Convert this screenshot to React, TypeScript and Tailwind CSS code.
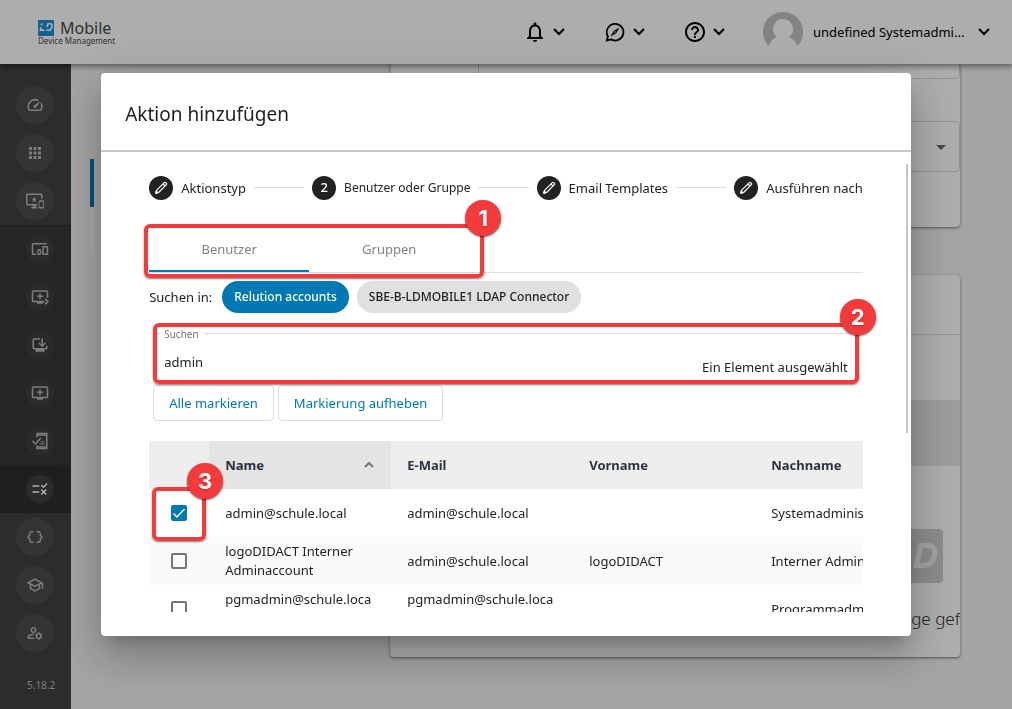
import React, { useState } from 'react';
import {
  MdApps,
  MdArrowDropDown,
  MdHelpOutline,
  MdImportantDevices,
  MdOutlineAddToQueue,
  MdOutlineBrowserUpdated,
  MdOutlineDataObject,
  MdOutlineDevicesOther,
  MdOutlineManageAccounts,
  MdOutlineNotifications,
  MdOutlineQueuePlayNext,
  MdOutlineRule,
  MdOutlineSchool,
  MdOutlineSpeed,
} from 'react-icons/md';

interface Account {
  id: number;
  name: string;
  email: string;
  firstName: string;
  lastName: string;
}

const ACCOUNTS: Account[] = [
  { id: 1, name: 'admin@schule.local', email: 'admin@schule.local', firstName: '', lastName: 'Systemadministrator' },
  { id: 2, name: 'logoDIDACT Interner Adminaccount', email: 'admin@schule.local', firstName: 'logoDIDACT', lastName: 'Interner Administrator' },
  { id: 3, name: 'pgmadmin@schule.local', email: 'pgmadmin@schule.local', firstName: '', lastName: 'Programmadministrator' },
];

const STEPS = ['Aktionstyp', 'Benutzer oder Gruppe', 'Email Templates', 'Ausführen nach'];
const ACTIVE_STEP = 1;

const PhoneChecklistIcon: React.FC = () => (
  <svg viewBox="0 0 24 24" className="size-[18px]" fill="none" stroke="currentColor" strokeWidth="2">
    <path d="M8 7V2h13v20H8v-4" />
    <path d="M8 4h13M8 20h13" />
    <path d="m2 12 4 4 7-8" />
    <path d="M13 13h5M11 16h7" strokeWidth="1.5" />
  </svg>
);

const CompassBubbleIcon: React.FC = () => (
  <svg viewBox="0 0 24 24" className="size-6">
    <path
      d="M12 3.9a8.300 8.300 0 1 1-4 15.500l-4.200 1 1.100-4A8.300 8.300 0 0 1 12 3.900Z"
      fill="none"
      stroke="currentColor"
      strokeWidth="1.8"
    />
    <path
      d="M16.500 7.500 13.200 13.200 7.500 16.500l3.300-5.700ZM12 11.200a.8.8 0 1 0 0 1.600.8.8 0 0 0 0-1.600Z"
      fill="currentColor"
      fillRule="evenodd"
    />
  </svg>
);

const Chevron: React.FC = () => (
  <svg viewBox="0 0 12 8" className="h-2 w-3" fill="none" stroke="currentColor" strokeWidth="2">
    <path d="m1 1 5 5 5-5" />
  </svg>
);

const PencilIcon: React.FC = () => (
  <svg viewBox="0 0 16 16" className="size-4" fill="none" stroke="currentColor" strokeWidth="1.2" strokeLinejoin="round">
    <path d="m2.800 13.200.7-2.800 7.800-7.800c.4-.4 1-.4 1.400 0l.7.7c.4.4.4 1 0 1.400l-7.800 7.800-2.800.7Z" />
    <path d="m10 4 2 2" />
    <path d="m2.800 13.200.5-2 1.500 1.500-2 .5Z" fill="currentColor" />
  </svg>
);

const Logo: React.FC = () => (
  <div className="flex flex-col pt-px text-[#4a4a4a]">
    <div className="flex h-[17px] items-start gap-1.5">
      <svg viewBox="0 0 16 16" className="size-4">
        <rect width="16" height="16" rx="1" fill="#1c8fd0" />
        <g fill="none" stroke="#fff" strokeWidth="1.6">
          <path d="M3.800 3.300 3.400 5.400M2.900 7.200l-.5 2.900h4" />
          <path d="m9.200 7 .6-3.200h2.400c1.600 0 2 1 1.700 2.700-.4 2.600-1.300 3.800-3 3.800H8.200" />
        </g>
      </svg>
      <span className="text-base leading-[17px]">Mobile</span>
    </div>
    <span className="text-[8px] leading-2">Device Management</span>
  </div>
);

const TOP_ITEMS = [
  { label: 'Dashboard', icon: <MdOutlineSpeed className="size-[18px]" /> },
  { label: 'Apps', icon: <MdApps className="size-[18px]" /> },
  { label: 'Geräte', icon: <MdImportantDevices className="size-[18px]" /> },
];

const DEVICE_ITEMS = [
  { label: 'Inventar', icon: <MdOutlineDevicesOther className="size-[18px]" /> },
  { label: 'Auto-Enrollments', icon: <MdOutlineQueuePlayNext className="size-[18px]" /> },
  { label: 'Updates', icon: <MdOutlineBrowserUpdated className="size-[18px]" /> },
  { label: 'Enrollments', icon: <MdOutlineAddToQueue className="size-[18px]" /> },
  { label: 'Richtlinien', icon: <PhoneChecklistIcon /> },
  { label: 'Regeln', icon: <MdOutlineRule className="size-[18px]" />, active: true },
];

const BOTTOM_ITEMS = [
  { label: 'Variablen', icon: <MdOutlineDataObject className="size-[18px]" /> },
  { label: 'Schule', icon: <MdOutlineSchool className="size-[18px]" /> },
  { label: 'Benutzer', icon: <MdOutlineManageAccounts className="size-[18px]" /> },
];

const NavItem: React.FC<{ label: string; icon: React.ReactNode }> = ({ label, icon }) => (
  <a href="#" aria-label={label} className="flex h-12 items-center pl-4">
    <span className="flex size-[38px] items-center justify-center rounded-full bg-[#4d4d4d]">{icon}</span>
  </a>
);

const Sidebar: React.FC = () => (
  <nav className="flex w-[71px] shrink-0 flex-col bg-[#424242] pt-[17px] text-[#b9b9b9]">
    {TOP_ITEMS.map((item) => (
      <NavItem key={item.label} {...item} />
    ))}
    <div className="border-y border-[#303030] bg-[#383838]">
      {DEVICE_ITEMS.map((item) => (
        <a
          key={item.label}
          href="#"
          aria-label={item.label}
          className={`flex h-12 items-center pl-[26px] first:-mt-px last:-mb-px ${item.active ? 'bg-[#2f2f2f] text-white' : ''}`}
        >
          <span className="flex size-7 items-center justify-center rounded-full bg-[#404040]">{item.icon}</span>
        </a>
      ))}
    </div>
    {BOTTOM_ITEMS.map((item) => (
      <NavItem key={item.label} {...item} />
    ))}
    <div className="mt-auto pb-4 pl-[27px] text-[10px] leading-4">5.18.2</div>
  </nav>
);

const Header: React.FC = () => (
  <header className="relative flex h-16 items-center justify-between bg-white pr-[22px] pl-[38px] shadow-[0_2px_6px_rgba(0,0,0,0.5)]">
    <Logo />
    <div className="flex items-center text-black">
      <div className="flex items-center gap-7">
        <button type="button" aria-label="Benachrichtigungen" className="flex w-[52px] items-center gap-1.5">
          <MdOutlineNotifications className="size-6" />
          <Chevron />
        </button>
        <button type="button" aria-label="Entdecken" className="flex w-[52px] items-center gap-1.5">
          <CompassBubbleIcon />
          <Chevron />
        </button>
        <button type="button" aria-label="Hilfe" className="flex w-[52px] items-center gap-1.5">
          <MdHelpOutline className="size-6" />
          <Chevron />
        </button>
      </div>
      <button type="button" aria-label="Konto" className="ml-7 flex items-center">
        <svg viewBox="0 0 40 40" className="size-10">
          <path
            d="M20 0a20 20 0 0 0-14.300 34C7.500 29 10.500 26.500 14 25a10 10 0 1 1 12 0c3.500 1.500 6.500 4 8.300 9A20 20 0 0 0 20 0Z"
            fill="#c2c2c2"
          />
        </svg>
        <span className="ml-2.5 w-[165px] text-left text-[13px] leading-5 whitespace-nowrap">undefined Systemadmi...</span>
        <Chevron />
      </button>
    </div>
  </header>
);

const RulePage: React.FC = () => (
  <main className="flex flex-1 items-start overflow-hidden bg-[#f2f2f2] pr-[52px] pl-[19px]">
    <div className="mt-[95px] w-1 shrink-0">
      <div className="h-12 bg-[#0078b4]" />
      <div className="h-12 bg-[#fafafa]" />
    </div>
    <div className="ml-[296px] flex min-w-0 flex-1 flex-col gap-12">
      <section className="h-[163px] rounded-b-sm bg-white shadow-[0_1px_3px_rgba(0,0,0,0.5)]">
        <div className="flex h-[15px] rounded-b-[5px] border border-t-0 border-[#d4d4d4]">
          <div className="w-[88px] border-r border-[#d4d4d4]" />
        </div>
        <div className="mt-[42px] flex h-[51px] items-center justify-end rounded-[5px] border border-[#d4d4d4] pr-1.5">
          <MdArrowDropDown className="size-6 text-[#666]" />
        </div>
      </section>
      <section className="h-[382px] overflow-hidden rounded-sm bg-white shadow-[0_1px_3px_rgba(0,0,0,0.5)]">
        <div className="h-[60px] border-b border-[#dedede]" />
        <div className="h-[65px]" />
        <div className="h-[66px] bg-[#e6e6e6]" />
        <div className="flex justify-end pt-[63px] pr-[17px]">
          <svg viewBox="0 0 54 54" className="size-[54px]">
            <rect width="54" height="54" rx="4" fill="#cecece" />
            <path
              d="m28 35.500 3.500-19h7c6 0 8 4 7 9.500-1.300 7-5.500 10.500-11.500 10.500h-9"
              fill="none"
              stroke="#f0f0f0"
              strokeWidth="5"
            />
          </svg>
        </div>
        <div className="mt-5 flex justify-end text-[17px] leading-8 font-light whitespace-nowrap text-[#333]">Keine Einträge gef</div>
      </section>
    </div>
  </main>
);

/* Numbered marker, sits on the top right corner of its frame */
const Callout: React.FC<{ number: number; className: string }> = ({ number, className }) => (
  <div
    className={`pointer-events-none absolute z-10 rounded-md border-4 border-[#f43b3b] shadow-[0_1px_2px_rgba(0,0,0,0.5)] ${className}`}
  >
    <span className="absolute -top-7 -right-[21px] flex size-9 items-center justify-center rounded-full bg-[#f43b3b] font-[Inter,sans-serif] text-[22px] leading-none font-bold text-white shadow-[0_1px_2px_rgba(0,0,0,0.6)] text-shadow-sm">
      {number}
    </span>
  </div>
);

const Stepper: React.FC = () => (
  <ol className="flex items-center gap-2">
    {STEPS.map((step, idx) => (
      <React.Fragment key={step}>
        {idx > 0 && <li aria-hidden className="h-px flex-1 bg-[#dcdcdc]" />}
        <li className={`flex items-center gap-2 whitespace-nowrap ${idx === ACTIVE_STEP ? 'text-xs' : ''}`}>
          <span className="flex size-6 items-center justify-center rounded-full bg-[#222] text-[13px] font-medium text-white">
            {idx === ACTIVE_STEP ? idx + 1 : <PencilIcon />}
          </span>
          {step}
        </li>
      </React.Fragment>
    ))}
  </ol>
);

const AccountTable: React.FC = () => {
  const [selected, setSelected] = useState<number[]>([1]);

  const toggle = (id: number) =>
    setSelected((prev) => (prev.includes(id) ? prev.filter((s) => s !== id) : [...prev, id]));

  return (
    <div className="relative mt-5">
      <div className="overflow-hidden">
        <table className="w-[788px] table-fixed border-collapse text-left">
          <colgroup>
            <col className="w-[60px]" />
            <col className="w-[182px]" />
            <col className="w-[182px]" />
            <col className="w-[182px]" />
            <col className="w-[182px]" />
          </colgroup>
          <thead className="bg-[#eee] text-[#2d3340]">
            <tr className="h-12">
              <th aria-label="Auswahl" />
              <th className="bg-[#e4e4e4] px-4">
                <div className="flex items-center justify-between">
                  Name
                  <svg viewBox="0 0 12 8" className="h-2 w-3 text-[#777]" fill="none" stroke="currentColor" strokeWidth="2">
                    <path d="m2 6 4-4 4 4" />
                  </svg>
                </div>
              </th>
              <th className="px-4">E-Mail</th>
              <th className="px-4">Vorname</th>
              <th className="px-4">Nachname</th>
            </tr>
          </thead>
          <tbody>
            {ACCOUNTS.map((account) => (
              <tr key={account.id} className="h-12 even:bg-[#fafafa]">
                <td>
                  <label className="flex items-center justify-center">
                    <input
                      type="checkbox"
                      aria-label={account.name}
                      checked={selected.includes(account.id)}
                      onChange={() => toggle(account.id)}
                      className="peer size-4 appearance-none rounded-xs border-2 border-[#757575] checked:border-[#0078b4] checked:bg-[#0078b4]"
                    />
                    <svg viewBox="0 0 16 16" className="pointer-events-none absolute hidden size-4 peer-checked:block" fill="none" stroke="#fff" strokeWidth="1.4">
                      <path d="m2.500 8.500 3.500 3.500 7.500-8" />
                    </svg>
                  </label>
                </td>
                <td className="pt-px pr-[18px] pl-4 leading-[19px] wrap-break-word">{account.name}</td>
                <td className="pt-px pr-[18px] pl-4 leading-[19px] wrap-break-word">{account.email}</td>
                <td className="px-4">{account.firstName}</td>
                <td className="px-4 whitespace-nowrap">{account.lastName}</td>
              </tr>
            ))}
          </tbody>
        </table>
      </div>
      <Callout number={3} className="top-[46px] left-[3px] h-[54px] w-[54px]" />
    </div>
  );
};

const AddActionDialog: React.FC = () => {
  const [query, setQuery] = useState('admin');

  return (
    <div className="fixed inset-0 flex items-center justify-center bg-black/32">
      <div
        role="dialog"
        aria-labelledby="dialog-title"
        className="relative w-[80vw] rounded bg-white pb-6 text-[13px] leading-5 text-[#222] shadow-[0_11px_15px_-7px_rgba(0,0,0,0.2),0_24px_38px_3px_rgba(0,0,0,0.14),0_9px_46px_8px_rgba(0,0,0,0.12)]"
      >
        <h1 id="dialog-title" className="border-b-2 border-[#c6c6c6] px-6 pt-6 pb-[19px] text-[19px] leading-[34px]">
          Aktion hinzufügen
        </h1>

        <div className="h-[65vh] overflow-hidden px-12 pt-6">
          <Stepper />

          <div className="relative mt-6 border-b border-[#dcdcdc]">
            <div role="tablist" className="flex text-[#828282]">
              <button type="button" role="tab" aria-selected="true" className="h-12 w-40 border-b-2 border-[#0078b4] pt-1">
                Benutzer
              </button>
              <button type="button" role="tab" aria-selected="false" className="h-12 w-40 border-b-2 border-transparent pt-1">
                Gruppen
              </button>
            </div>
            <Callout number={1} className="top-0 -left-[5px] h-[54px] w-[340px]" />
          </div>

          <div className="mt-2 flex items-center gap-2">
            <span className="mr-0.5">Suchen in:</span>
            <button type="button" className="h-8 rounded-full bg-[#0078b4] px-3 text-xs font-medium text-white">
              Relution accounts
            </button>
            <button type="button" className="h-8 rounded-full bg-[#e0e0e0] px-3 text-xs font-medium">
              SBE-B-LDMOBILE1 LDAP Connector
            </button>
          </div>

          <div className="relative mx-1 mt-[13px]">
            <fieldset className="flex h-[57px] justify-between rounded-[5px] border border-[#dcdcdc] px-2.5 pb-[5px]">
              <legend className="-ml-1 px-1 text-[10px] leading-4 text-[#757575]">Suchen</legend>
              <input
                aria-label="Suchen"
                value={query}
                onChange={(e) => setQuery(e.target.value)}
                className="h-10 min-w-0 flex-1 outline-none"
              />
              <span className="self-end">Ein Element ausgewählt</span>
            </fieldset>
            <Callout number={2} className="inset-x-0 -top-[3px] h-[61px]" />
          </div>

          <div className="mx-1 mt-0.5 flex gap-1 text-[#0078b4]">
            <button type="button" className="h-9 rounded border border-[#dcdcdc] px-[15px]">
              Alle markieren
            </button>
            <button type="button" className="h-9 rounded border border-[#dcdcdc] px-[15px]">
              Markierung aufheben
            </button>
          </div>

          <AccountTable />
        </div>

        {/* Scroll thumb */}
        <div className="absolute top-[91px] right-[3px] h-[269px] w-0.5 bg-[#c2c6cc]" />
      </div>
    </div>
  );
};

const App: React.FC = () => (
  <div className="flex min-h-screen flex-col font-['Noto_Sans',sans-serif]">
    <Header />
    <div className="flex flex-1">
      <Sidebar />
      <RulePage />
    </div>
    <AddActionDialog />
  </div>
);

export default App;
